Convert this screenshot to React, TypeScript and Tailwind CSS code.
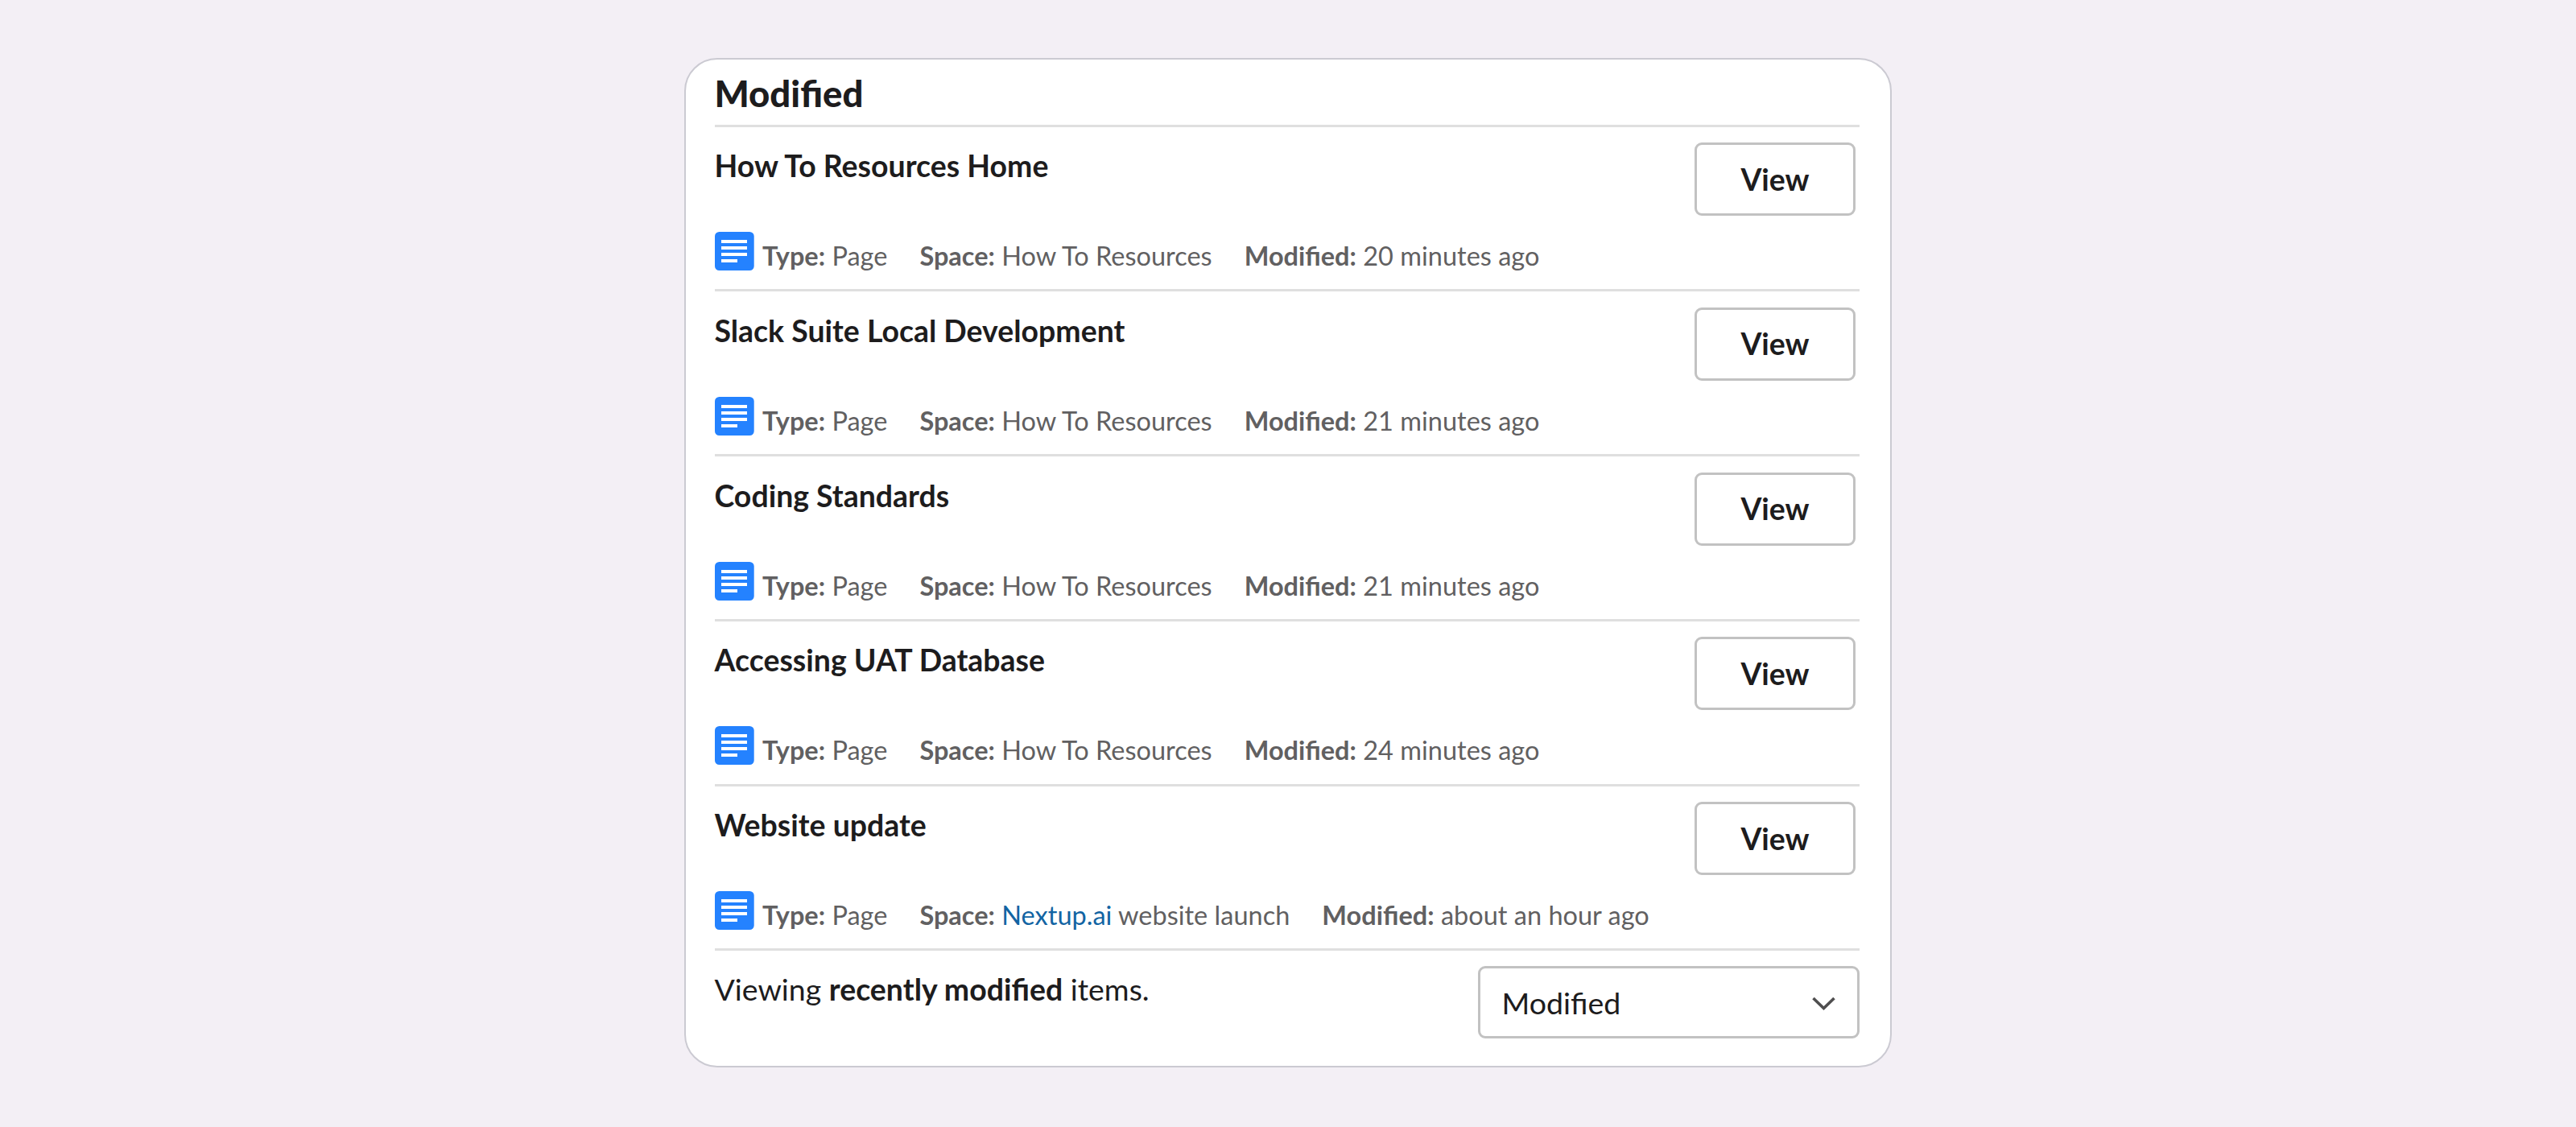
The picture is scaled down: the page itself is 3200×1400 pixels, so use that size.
import React from 'react';

interface Item {
  title: string;
  space: React.ReactNode;
  modified: string;
}

const items: Item[] = [
  { title: 'How To Resources Home', space: 'How To Resources', modified: '20 minutes ago' },
  { title: 'Slack Suite Local Development', space: 'How To Resources', modified: '21 minutes ago' },
  { title: 'Coding Standards', space: 'How To Resources', modified: '21 minutes ago' },
  { title: 'Accessing UAT Database', space: 'How To Resources', modified: '24 minutes ago' },
  {
    title: 'Website update',
    space: (
      <>
        <a className="text-[#1264a3]">Nextup.ai</a> website launch
      </>
    ),
    modified: 'about an hour ago',
  },
];

const PageIcon: React.FC = () => (
  <svg className="h-12 w-[49px] shrink-0" viewBox="0 0 49 48" fill="none">
    <rect width="48.7" height="48" rx="5.5" fill="#2482ff" />
    <path d="M8 12h32M8 20h32M8 28h32M8 36h20" stroke="#fff" strokeWidth="4" />
  </svg>
);

const ItemRow: React.FC<{ item: Item }> = ({ item }) => (
  <li className="h-[204.8px] border-t-[3px] border-[#dfdfdf] pt-[19.5px]">
    <div className="flex items-start justify-between">
      <h3 className="-ml-[0.5px] mt-1 text-[37.45px] leading-[50px] font-bold">{item.title}</h3>
      <button className="mr-[5px] h-[91px] w-[200px] rounded-[9px] border-[3px] border-[#c2c2c2] text-[37.4px] leading-[50px] font-bold">
        View
      </button>
    </div>
    <div className="mt-5 flex items-start">
      <PageIcon />
      <div className="mt-1.5 ml-2.5 flex gap-[40px] text-[32.5px] leading-[48px] whitespace-nowrap text-[#616061]">
        <span>
          <b className="font-bold">Type:</b> Page
        </span>
        <span>
          <b className="font-bold">Space:</b> {item.space}
        </span>
        <span>
          <b className="font-bold">Modified:</b> {item.modified}
        </span>
      </div>
    </div>
  </li>
);

export default function App() {
  return (
    <div className="flex h-[1400px] w-[3200px] justify-center bg-[#f3eff5] pt-18 font-['Lato','Liberation_Sans',sans-serif] text-[#1d1c1d]">
      <div className="h-[1254px] w-[1500px] rounded-[41px] border-2 border-[#cbcad2] bg-white pr-[38px] pl-9">
        <h2 className="-ml-[0.5px] h-[80.5px] text-[45.5px] leading-[83px] font-black">Modified</h2>
        <ul>
          {items.map((item) => (
            <ItemRow key={item.title} item={item} />
          ))}
        </ul>

        {/* Footer with the filter select */}
        <div className="flex items-start justify-between border-t-[3px] border-[#dfdfdf] pt-[19px]">
          <p className="-ml-[0.5px] mt-1 text-[37.45px] leading-[50px]">
            Viewing <b className="font-bold">recently modified</b> items.
          </p>
          <div className="flex h-[90px] w-[474px] items-center justify-between rounded-[9px] border-[3px] border-[#c2c2c2] pr-[27px] pl-[26.5px]">
            <span className="pt-0.5 text-[37.5px] leading-[50px]">Modified</span>
            <svg className="mt-0.5 h-[17px] w-[29px]" viewBox="0 0 29 17" fill="none">
              <path d="M1.5 2 14.5 14.5 27.5 2" stroke="#4f4e4f" strokeWidth="3.6" />
            </svg>
          </div>
        </div>
      </div>
    </div>
  );
}
